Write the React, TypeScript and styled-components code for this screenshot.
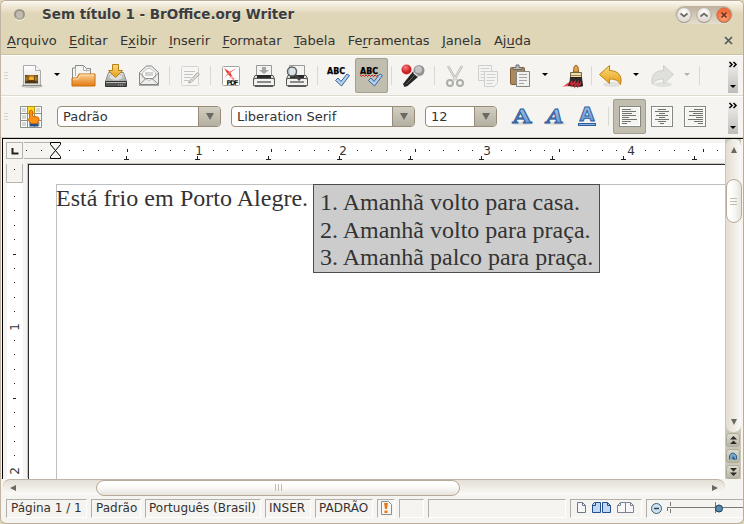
import React from "react";
import styled, { createGlobalStyle, css } from "styled-components";

const Global = createGlobalStyle`
  html, body { margin: 0; padding: 0; background: #dfd5b7; overflow: hidden; }
  * { box-sizing: border-box; }
  body { font: 13px "DejaVu Sans", sans-serif; color: #333; }
  svg { display: block; flex: none; overflow: visible; }
`;

const Window = styled.div`
  width: 744px;
  height: 524px;
  display: flex;
  flex-direction: column;
  border: 1px solid #b9ac99;
  border-left-color: #c2b4a3;
  border-bottom: 1px solid #b9ac99;
  border-radius: 6px;
  background: #f5f4f0;
  overflow: hidden;
`;

const TitleBar = styled.header`
  height: 27px;
  flex: none;
  display: flex;
  align-items: center;
  padding: 0 10px 0 13px;
  background: linear-gradient(#fcfaf5 0, #f3ecdc 4px, #e4dabf 11px, #dfd5b7 13px);
`;

const WindowDot = styled.i`
  width: 11px;
  height: 11px;
  border-radius: 50%;
  background: #c1bcb2;
  border: 2px solid #9a9486;
  border-bottom-color: #b5ae9e;
  box-shadow: 0 1px 0 #f6f1e2;
`;

const Title = styled.h1`
  margin: 0 auto 0 17px;
  font-size: 13.5px;
  font-weight: bold;
  line-height: 27px;
  color: #3c3d3f;
  text-shadow: 0 1px 0 #f1ead7;
  white-space: nowrap;
`;

const WindowButtons = styled.div`
  display: flex;
  gap: 4px;
  height: 18px;
  padding: 1px;
  border-radius: 9px;
  background: linear-gradient(#bcb09e, #e6dfce);
`;

const MenuBar = styled.nav`
  height: 27px;
  flex: none;
  display: flex;
  align-items: center;
  padding: 0 10px 1px 6px;
  background: #dfd5b7;
  border-bottom: 1px solid #d0c3a0;
`;

const MenuItem = styled.span`
  margin-right: 12.3px;
  line-height: 20px;
  white-space: nowrap;
  u { text-underline-offset: 2px; text-decoration-thickness: 1px; }
`;

const Toolbar = styled.div<{ $last?: boolean }>`
  height: ${(p) => (p.$last ? 42 : 41)}px;
  flex: none;
  display: flex;
  align-items: center;
  background: #f5f4f0;
  border-top: 1px solid #fff;
  border-bottom: 1px solid ${(p) => (p.$last ? "#cfcdc4" : "#dfdccf")};
  padding: 0 5px ${(p) => (p.$last ? 1 : 0)}px 3px;
`;

const Grip = styled.i`
  width: 4px;
  height: 8px;
  margin-right: 12px;
  background: repeating-linear-gradient(#d8d5cd 0 1px, #f5f4f0 1px 3px);
`;

const Slot = styled.span<{ $before: number; $pressed?: boolean }>`
  flex: none;
  display: flex;
  align-items: center;
  justify-content: center;
  margin-left: ${(p) => p.$before}px;
  ${(p) =>
    p.$pressed &&
    css`
      width: 33px;
      height: 35px;
      border: 1px solid #a39f8e;
      border-radius: 2px;
      background: #c1beb0;
    `}
`;

const Separator = styled.i<{ $before: number }>`
  width: 1px;
  height: 19px;
  margin-left: ${(p) => p.$before}px;
  background: #dad8d0;
`;

const Caret = styled.i<{ $before: number; $dim?: boolean }>`
  margin-left: ${(p) => p.$before}px;
  margin-bottom: 2px;
  border: 3px solid transparent;
  border-top-color: ${(p) => (p.$dim ? "#b4b2ac" : "#000")};
  border-bottom: 0;
`;

const Overflow = styled.div`
  width: 10px;
  height: 35px;
  margin-left: auto;
  display: flex;
  flex-direction: column;
  justify-content: space-between;
  align-items: center;
  padding: 4px 0 5px;
  background: linear-gradient(#f7f6f3, #bebdbb);
`;

const OverflowCaret = styled.i`
  border: 3px solid transparent;
  border-top-color: #000;
  border-bottom: 0;
`;

const Combo = styled.div<{ $w: number; $before: number }>`
  width: ${(p) => p.$w}px;
  height: 21px;
  flex: none;
  margin-left: ${(p) => p.$before}px;
  display: flex;
  border: 1px solid #988c78;
  border-radius: 4px;
  background: #fff;
  overflow: hidden;
  line-height: 19px;
  padding-left: 5px;
  white-space: nowrap;
`;

const ComboButton = styled.span`
  width: 22px;
  margin-left: auto;
  display: flex;
  align-items: center;
  justify-content: center;
  border-left: 1px solid #988c78;
  background: linear-gradient(#d2cfc2, #b3b0a2);
  &::after {
    content: "";
    border: 4px solid transparent;
    border-top: 7px solid #6a6963;
    border-bottom: 0;
  }
`;

const Workspace = styled.main`
  height: 341px;
  flex: none;
  display: grid;
  grid-template-columns: 723px 17px;
  grid-template-rows: 25px 315px;
  margin-left: 1px;
  border-top: 1px solid #000;
`;

const HorizontalRuler = styled.div`
  border-left: 1px solid #000;
`;

const EditArea = styled.div`
  display: flex;
  border-left: 1px solid #000;
`;

const Page = styled.article`
  flex: 1;
  padding: 19px 0 0 27px;
  background: #fff;
  border: solid #2d2d2d;
  border-width: 1px 0 0 1px;
  box-shadow: -1px -1px 0 #c8c6bf;
`;

const TextFrame = styled.div`
  height: 100%;
  display: flex;
  align-items: flex-start;
  border: solid #bfbfbf;
  border-width: 1px 0 0 1px;
  font-family: "Liberation Serif", serif;
  font-size: 24px;
  white-space: nowrap;
`;

const Paragraph = styled.p`
  width: 257px;
  flex: none;
  margin: 0 0 0 -1px;
  line-height: 27px;
  word-spacing: 0.2px;
`;

const Suggestions = styled.ol`
  width: 287px;
  height: 89px;
  flex: none;
  margin: -1px 0 0;
  padding: 4px 0 0 6px;
  list-style: none;
  background: #ccc;
  border: 1px solid #4c4c4c;
  li { line-height: 27.5px; }
`;

const VerticalScroll = styled.div`
  grid-column: 2;
  grid-row: 1 / 3;
  width: 16px;
  display: flex;
  flex-direction: column;
  background: #cbc7b9;
`;

const VerticalTrack = styled.div`
  height: 293px;
  flex: none;
  display: flex;
  flex-direction: column;
  align-items: center;
  justify-content: space-between;
  margin-left: 1px;
  border-radius: 7px;
  background: linear-gradient(90deg, #e3ddd2, #faf9f6);
  padding: 8px 0 7px;
`;

const Thumb = styled.div<{ $vertical?: boolean }>`
  flex: none;
  width: ${(p) => (p.$vertical ? 16 : 364)}px;
  height: ${(p) => (p.$vertical ? 44 : 16)}px;
  border: 1px solid #b8aa98;
  border-radius: 8px;
  display: flex;
  align-items: center;
  justify-content: center;
  background: linear-gradient(${(p) => (p.$vertical ? "90deg" : "180deg")}, #fff 20%, #f9f8f5 50%, #e6e3dc);
`;

const ThumbGrip = styled.i<{ $vertical?: boolean }>`
  width: 7px;
  height: 7px;
  background: repeating-linear-gradient(${(p) => (p.$vertical ? "180deg" : "90deg")}, #c4bbac 0 1px, transparent 1px 3px);
`;

const TrackStart = styled.div`
  height: 32px;
`;

const TrackEnd = styled.div`
  height: 202px;
  display: flex;
  align-items: flex-end;
`;

const NavButton = styled.span`
  height: 14px;
  flex: none;
  margin: 1px 1px 1px;
  display: flex;
  align-items: center;
  justify-content: center;
  border: 1px solid #b0ac9a;
  border-radius: 3px;
  background: linear-gradient(#dedbcf, #b8b4a4);
`;

const HorizontalScroll = styled.div`
  width: 722px;
  height: 16px;
  flex: none;
  margin-left: 2px;
  display: flex;
  align-items: center;
  border-top: 1px solid #bcb4a5;
  border-radius: 7px 8px 8px 7px;
  background: linear-gradient(#e4dfd5, #fbfaf8);
  padding: 0 7px;
`;

const ThumbOffset = styled.div`
  width: 86px;
`;

const StatusBar = styled.footer`
  height: 27px;
  flex: none;
  display: flex;
  gap: 4px;
  padding: 4px 0 0 5px;
  font-size: 12px;
`;

const Cell = styled.div<{ $w: number; $pad?: number }>`
  width: ${(p) => p.$w}px;
  height: 19px;
  flex: none;
  display: flex;
  align-items: center;
  padding: 0 0 1px ${(p) => p.$pad ?? 4}px;
  border: 1px solid #fff;
  border-top-color: #b0aea8;
  border-left-color: #b0aea8;
  white-space: nowrap;
  overflow: hidden;
`;

const PushEnd = styled.span`
  margin-left: auto;
`;

const Definitions = styled.svg`
  position: absolute;
`;

type IconProps = { w?: number; h?: number; children: React.ReactNode };
const Icon = ({ w = 24, h = 24, children }: IconProps) => (
  <svg width={w} height={h} viewBox={`0 0 ${w} ${h}`}>{children}</svg>
);

const Gradients = () => (
  <Definitions width="0" height="0">
    <defs>
      <linearGradient id="paper" x2="0" y2="1"><stop stopColor="#fff" /><stop offset="1" stopColor="#d9d9d7" /></linearGradient>
      <linearGradient id="orange" x2="0" y2="1"><stop stopColor="#fad29a" /><stop offset="1" stopColor="#e57a0e" /></linearGradient>
      <linearGradient id="gold" x2="0" y2="1"><stop stopColor="#fbdc7a" /><stop offset="1" stopColor="#e59d18" /></linearGradient>
      <linearGradient id="steel" x2="0" y2="1"><stop stopColor="#e8e8e8" /><stop offset="1" stopColor="#a4a5a5" /></linearGradient>
      <linearGradient id="blue" x2="0" y2="1"><stop stopColor="#a9c6e8" /><stop offset="1" stopColor="#5d8fce" /></linearGradient>
      <radialGradient id="sunset" cy=".45" r=".6"><stop stopColor="#ffcf3d" /><stop offset=".5" stopColor="#c98320" /><stop offset="1" stopColor="#5b4420" /></radialGradient>
      <radialGradient id="red" cx=".4" cy=".3"><stop stopColor="#f58080" /><stop offset="1" stopColor="#cc2023" /></radialGradient>
      <radialGradient id="pearl" cy=".3"><stop stopColor="#fff" /><stop offset="1" stopColor="#e3dfd8" /></radialGradient>
      <radialGradient id="closeFill" cy=".7"><stop stopColor="#ffa57b" /><stop offset="1" stopColor="#f26d38" /></radialGradient>
    </defs>
  </Definitions>
);

const WinButton = ({ d, close }: { d: string; close?: boolean }) => (
  <Icon w={16} h={16}>
    <circle cx="8" cy="8.6" r="7.4" fill="#958978" />
    <circle cx="8" cy="8" r="7.2" fill={close ? "url(#closeFill)" : "url(#pearl)"} stroke={close ? "#c76a45" : "#b9afa2"} strokeWidth=".6" />
    <path d={d} fill="none" stroke={close ? "#693325" : "#696761"} strokeWidth="1.7" />
  </Icon>
);

const NewIcon = () => (
  <Icon>
    <ellipse cx="12" cy="22.500" rx="11" ry="1.500" fill="#999" opacity=".5" />
    <path d="M3.500 1.500h12l5 5v15h-17z" fill="url(#paper)" stroke="#a9aaa8" />
    <path d="M15.500 1.500v5h5" fill="#f8f8f8" stroke="#aaa" />
    <path d="M5 11h13v8H5z" fill="url(#sunset)" />
    <path d="M5 19l4-2.500h5l4 2.500zM8 12v7M14.500 12v6" fill="#4e3515" stroke="#4e3515" strokeWidth=".7" />
    <path d="M2 21.500h20" stroke="#8c8d8b" />
  </Icon>
);
const OpenIcon = () => (
  <Icon>
    <path d="M1.500 20V4h3V1.500h8l3 3h4V20" fill="#f4f4f2" stroke="#888a85" />
    <path d="M4.500 4v8M12.500 1.500v5h7M15.500 4.500v3" stroke="#b1b2af" fill="none" />
    <path d="M1 22V14h5l2-4h16v12z" fill="url(#orange)" stroke="#c46c13" />
    <path d="M2 15h5l2-4h14" stroke="#ffe0ad" fill="none" />
  </Icon>
);
const SaveIcon = () => (
  <Icon>
    <path d="M4.500 8.500h15l3 9h-21z" fill="url(#steel)" stroke="#8b8c8a" />
    <ellipse cx="12" cy="13" rx="7" ry="3.500" fill="#dedfdd" stroke="#b5b6b4" />
    <path d="M1.500 17.500h21v5h-21z" fill="#555753" stroke="#333" />
    <path d="M2 18.500h20" stroke="#b9bbb7" />
    <path d="M14 21h6" stroke="#bbb" strokeDasharray="1 1" />
    <path d="M8.500 .500h6v6h4l-7 7-7-7h4z" fill="url(#gold)" stroke="#b67e19" />
  </Icon>
);
const MailIcon = () => (
  <Icon>
    <path d="M2.500 8.500L9.500 2h5l7 6.500v12h-19z" fill="#eeeeec" stroke="#868884" />
    <path d="M5.500 13.500v-5l5-4h3l5 4v5l-6.500 3z" fill="#fafafa" stroke="#c1c2bf" />
    <path d="M8 9h8M8 11h8" stroke="#aaa" />
    <path d="M2.500 9l6 5.500h7l6-5.500M3 20l6-5.500M21 20l-6-5.500" fill="none" stroke="#8d8f8b" />
    <path d="M2 21.500h20" stroke="#aaa" />
  </Icon>
);
const EditIcon = () => (
  <Icon>
    <rect x="3.500" y="2.500" width="17" height="19" rx="1" fill="#f6f6f4" stroke="#d4d3cf" />
    <path d="M6 7.500h11M6 10.500h9M6 13.500h7M6 16.500h5" stroke="#c5c4c0" />
    <path d="M11.500 17l8-8.500 2 2-8 7.500-3 1z" fill="#dfdedb" stroke="#aaa9a5" />
  </Icon>
);
const PdfIcon = () => (
  <Icon>
    <rect x="3.500" y="2.500" width="17" height="19" rx="1" fill="#fff" stroke="#a1a39f" />
    <path d="M5 4l6 4 5 10-8-9z" fill="#ee3a36" />
    <path d="M5 14l5-6 8-4-7 5z" fill="#f46e69" />
    <path d="M12 12l6 3-8-1z" fill="#f9b4b0" />
    <text x="7.500" y="20.500" fontSize="6.500" fontWeight="bold" fontFamily="DejaVu Sans, sans-serif" textLength="12" fill="#111">PDF</text>
  </Icon>
);
const PrintIcon = ({ preview }: { preview?: boolean }) => (
  <Icon>
    <path d="M4.500 12V1.500h15V12" fill="#f3f4f2" stroke="#999b97" />
    <path d="M3 11.500h18l1.500 3v7h-21v-7z" fill="url(#steel)" stroke="#555753" />
    <path d="M5 11h14v4H5z" fill="#2a2a2a" />
    <rect x="1.500" y="14.500" width="21" height="7.500" rx="1.500" fill="#f2f3f0" stroke="#555753" />
    <path d="M5 18h14" stroke="#8b8d88" strokeWidth="2" />
    <path d="M3 22h18" stroke="#41443f" strokeWidth="1.500" />
    {preview ? (
      <g><circle cx="7" cy="7.500" r="4.500" fill="#d6dfe6" fillOpacity=".8" stroke="#5f615f" strokeWidth="1.500" /><path d="M10 11l5 5" stroke="#444" strokeWidth="2.500" /></g>
    ) : (
      <path d="M10 3h4v3h3l-5 4-5-4h3z" fill="#a3a5a1" />
    )}
  </Icon>
);
const CheckIcon = ({ wavy }: { wavy?: boolean }) => (
  <Icon>
    <text x="0" y="9.500" fontSize="8" fontWeight="bold" fontFamily="DejaVu Sans, sans-serif" textLength="18" lengthAdjust="spacingAndGlyphs" fill="#000" stroke="#000" strokeWidth=".25">ABC</text>
    {wavy && <path d="M0 11l1.500 1.500L3 11l1.500 1.500L6 11l1.500 1.500L9 11l1.500 1.500L12 11l1.500 1.500L15 11l1.500 1.500L18 11" fill="none" stroke="#d32222" />}
    <path d="M8.500 16.500l2.500-2.500 3 3.500L20 10l2.500 1.500-8 10.500z" fill="#b7d0ec" stroke="#34659f" strokeLinejoin="round" />
  </Icon>
);
const MicIcon = () => (
  <Icon>
    <path d="M3.500 23l-1.500-3L12 7.500l5.500 5L6.500 22z" fill="#242424" />
    <path d="M5 20.500L14.500 10" stroke="#666" />
    <circle cx="18" cy="6.500" r="5.500" fill="#929392" />
    <circle cx="17.500" cy="5.500" r="3.500" fill="#c4c5c4" />
    <path d="M12.500 8.500l4.500 4" stroke="#dcdcdc" strokeWidth="1.500" />
    <circle cx="5.500" cy="5.500" r="5" fill="url(#red)" />
  </Icon>
);
const CutIcon = () => (
  <Icon>
    <path d="M5 2l8 14M19 2l-8 14" stroke="#b6b6b3" strokeWidth="2.500" />
    <path d="M5 2l8 14M19 2l-8 14" stroke="#e6e6e3" strokeWidth="1" />
    <circle cx="7" cy="19" r="3" fill="none" stroke="#acaca9" strokeWidth="2" />
    <circle cx="17" cy="19" r="3" fill="none" stroke="#acaca9" strokeWidth="2" />
  </Icon>
);
const CopyIcon = () => (
  <Icon>
    {[[2.5, 1.5], [8.5, 7.5]].map(([x, y]) => (
      <g key={x}>
        <path d={`M${x} ${y}h13v11l-3 4h-10z`} fill="#f4f4f2" stroke="#cfcfcc" />
        <path d={`M${x + 2} ${y + 3}h9m-9 3h9m-9 3h8m-8 3h6`} stroke="#d0d0cd" />
      </g>
    ))}
  </Icon>
);
const PasteIcon = () => (
  <Icon>
    <rect x="2.500" y="3.500" width="14" height="17" rx="1" fill="#ab8958" stroke="#7c5d34" />
    <path d="M5 5.500V3.500h3V1h3v2.500h3v2z" fill="#bfc0be" stroke="#686a66" />
    <path d="M8.500 7.500h13v15h-13z" fill="#f1f1ef" stroke="#838580" />
    <path d="M11 10.500h8M11 13.500h8M11 16.500h8M11 19.500h5" stroke="#a5a6a3" />
  </Icon>
);
const BrushIcon = () => (
  <Icon>
    <path d="M1 22.500c5-.5 5-4 10-4.500l3 4z" fill="#f5484a" />
    <path d="M13.500 8L14 3q2-3.500 4 0l.5 5z" fill="#e7a652" stroke="#945a1e" />
    <path d="M10.500 8.500h11v5h-11z" fill="#ebdcae" stroke="#73633e" />
    <path d="M11 11.500h10" stroke="#a98a4e" />
    <path d="M10.500 13.500h11l1 8.500-6 .500-8-1q2-3 2-8z" fill="#30292a" stroke="#241d1e" />
    <path d="M10 21l2-4v4.500l3-4v5l3-4.500v4.500l3-4" fill="none" stroke="#c62b38" strokeWidth="1.300" />
  </Icon>
);
const ArrowIcon = ({ redo }: { redo?: boolean }) => (
  <Icon>
    <ellipse cx="13" cy="20.500" rx="9" ry="2.500" fill="#bbb" opacity=".35" />
    <path transform={redo ? "translate(24 0) scale(-1 1)" : undefined} d="M.5 10.500L10.500 1.500v5c8 0 13.500 5 11 14-2-4-5.500-5.500-11-5.500v4.500z" fill={redo ? "#dfdfdc" : "url(#gold)"} stroke={redo ? "#cfcfcc" : "#c28314"} strokeLinejoin="round" />
  </Icon>
);
const StylesIcon = () => (
  <Icon>
    <rect x="1" y="1" width="21" height="21" fill="#fafaf9" />
    <path d="M1.500 1.500h21v21h-21zM8.500 1v21M15.500 1v21M1 8.500h21M1 15.500h21" fill="none" stroke="#8d908a" />
    <path d="M3 3h4v4H3zM3 10h4v4H3zM3 17h4v4H3zM17 3h4v4h-4zM17 17h4v4h-4z" fill="#d4d6d1" />
    <rect x="8.500" y="1.500" width="7" height="7" fill="#fadb26" stroke="#b78f08" />
    <path d="M10.500 17h9v4.500h-9z" fill="#244f88" />
    <path d="M10.500 6q2-2 3 0v5l5 1q2 .500 1.500 3l-1.500 3.500h-6.500l-3-4 1.500-1z" fill="#fd9118" stroke="#d46707" />
  </Icon>
);
const LetterIcon = ({ italic, underline }: { italic?: boolean; underline?: boolean }) => (
  <Icon>
    {!underline && <ellipse cx="12" cy="18.500" rx="11" ry="1.500" fill="#999" opacity=".3" />}
    <text
      x="12" y={underline ? 16 : 18} textAnchor="middle" fontSize={underline ? 19 : 19}
      fontFamily={underline ? "DejaVu Sans, sans-serif" : "DejaVu Serif, Liberation Serif, serif"} fontWeight="bold" fontStyle={italic ? "italic" : "normal"}
      textLength={underline ? 15 : italic ? 17 : 19} lengthAdjust="spacingAndGlyphs" fill="url(#blue)" stroke="#2c5b9c" strokeWidth=".9"
    >A</text>
    {underline && <rect x="3.500" y="18.500" width="17" height="2" fill="#8eb1df" stroke="#2c5b9c" />}
  </Icon>
);
const alignRows = {
  left: ["M3 4h9", "M3 6h14", "M3 8h10", "M3 10h14", "M3 12h7", "M3 14h15", "M3 16h9", "M3 18h5"],
  center: ["M7 4h8", "M4 6h14", "M8 8h6", "M5 10h12", "M8 12h6", "M4 14h14", "M7 16h8", "M9 18h4"],
  right: ["M10 4h9", "M5 6h14", "M9 8h10", "M5 10h14", "M12 12h7", "M4 14h15", "M10 16h9", "M14 18h5"],
};
const AlignIcon = ({ side }: { side: keyof typeof alignRows }) => (
  <Icon w={22} h={22}>
    <rect x=".5" y=".5" width="21" height="20" fill="#f4f4f1" stroke="#858982" />
    <rect x="1.500" y="1.500" width="19" height="18" fill="none" stroke="#fff" />
    <path d={alignRows[side].join("")} transform="translate(0 -.5)" stroke="#71746f" />
  </Icon>
);

const OverflowMenu = () => (
  <Overflow>
    <Icon w={8} h={6}><path d="M.5 0l2.500 2.500-2.500 2.500M4.500 0l2.500 2.500-2.500 2.500" fill="none" stroke="#000" strokeWidth="1.500" /></Icon>
    <OverflowCaret />
  </Overflow>
);

const INCH = 144;
const range = (n: number) => Array.from({ length: n }, (_, i) => i);

const TopRuler = () => (
  <Icon w={722} h={25}>
    <rect width="722" height="25" fill="#f5f4f0" />
    <rect x="53" y="4" width="669" height="16" fill="#fff" />
    <rect x="3.500" y="3.500" width="16" height="16" fill="#f5f4f0" stroke="#b5b3ad" />
    <path d="M9.500 9v5.500h6" fill="none" stroke="#222" strokeWidth="2" />
    <path d="M21 3.500h31M21 19.500h31" stroke="#b5b3ad" />
    <path d="M23 11.500h1M38 11.500h1" stroke="#222" />
    {range(47).slice(1).map((i) => {
      const x = Math.floor(52 + (i * INCH) / 10);
      if (i % 10 === 0) return <text key={i} x={x} y="15.500" textAnchor="middle" fontSize="12" fill="#333">{i / 10}</text>;
      return <rect key={i} x={x} y={i % 5 ? 11 : 10} width="1" height={i % 5 ? 1 : 3} fill="#222" />;
    })}
    {range(10).slice(1).map((i) => <path key={i} d={`M${52.5 + i * 71} 17v3m-2.500 .5h5`} stroke="#222" />)}
    <path d="M47.500 3.500h10v2l-5 6 5 6v2h-10v-2l5-6-5-6z" fill="#f5f4f0" stroke="#000" />
  </Icon>
);

const SideRuler = () => (
  <Icon w={25} h={315}>
    <rect width="25" height="315" fill="#f5f4f0" />
    <rect x="4" y="18" width="16" height="297" fill="#fff" />
    <path d="M3.500 0v18.500h16V0" fill="none" stroke="#b5b3ad" />
    <rect x="11" y="5" width="1" height="1" fill="#222" />
    {range(21).slice(1).map((i) => {
      const y = Math.floor(19 + (i * INCH) / 10);
      if (i % 10 === 0) return <text key={i} transform={`translate(15.500 ${y}) rotate(-90)`} textAnchor="middle" fontSize="12" fill="#333">{i / 10}</text>;
      return <rect key={i} x={i % 5 ? 11 : 10} y={y - 1} width={i % 5 ? 1 : 3} height="1" fill="#222" />;
    })}
  </Icon>
);

const Triangle = ({ d }: { d: string }) => (
  <Icon w={6} h={6}><path d={d} fill="#696861" /></Icon>
);

const menus = [["", "A", "rquivo"], ["", "E", "ditar"], ["E", "x", "ibir"], ["", "I", "nserir"], ["", "F", "ormatar"], ["", "T", "abela"], ["Fe", "r", "ramentas"], ["", "J", "anela"], ["Aj", "u", "da"]];

export default function App() {
  return (
    <>
      <Global />
      <Gradients />
      <Window>
        <TitleBar>
          <WindowDot />
          <Title>Sem título 1 - BrOffice.org Writer</Title>
          <WindowButtons>
            <WinButton d="M4.500 6.500L8 9.500l3.500-3" />
            <WinButton d="M4.500 9.500L8 6.500l3.500 3" />
            <WinButton close d="M5.500 5.500l5 5m0-5l-5 5" />
          </WindowButtons>
        </TitleBar>
        <MenuBar>
          {menus.map(([a, u, b]) => <MenuItem key={u + b}>{a}<u>{u}</u>{b}</MenuItem>)}
          <PushEnd>
            <Icon w={9} h={9}><path d="M1 1l7 7M8 1L1 8" stroke="#53595c" strokeWidth="1.700" /></Icon>
          </PushEnd>
        </MenuBar>

        <Toolbar>
          <Grip />
          <Slot $before={0}><NewIcon /></Slot>
          <Caret $before={10} />
          <Slot $before={11}><OpenIcon /></Slot>
          <Slot $before={9}><SaveIcon /></Slot>
          <Slot $before={9}><MailIcon /></Slot>
          <Separator $before={8} />
          <Slot $before={8}><EditIcon /></Slot>
          <Separator $before={8} />
          <Slot $before={8}><PdfIcon /></Slot>
          <Slot $before={9}><PrintIcon /></Slot>
          <Slot $before={9}><PrintIcon preview /></Slot>
          <Separator $before={8} />
          <Slot $before={9}><CheckIcon /></Slot>
          <Slot $before={4} $pressed><CheckIcon wavy /></Slot>
          <Separator $before={3} />
          <Slot $before={9}><MicIcon /></Slot>
          <Separator $before={9} />
          <Slot $before={8}><CutIcon /></Slot>
          <Slot $before={9}><CopyIcon /></Slot>
          <Slot $before={8}><PasteIcon /></Slot>
          <Caret $before={10} />
          <Slot $before={12}><BrushIcon /></Slot>
          <Separator $before={7} />
          <Slot $before={7}><ArrowIcon /></Slot>
          <Caret $before={10} />
          <Slot $before={11}><ArrowIcon redo /></Slot>
          <Caret $before={10} $dim />
          <Separator $before={9} />
          <OverflowMenu />
        </Toolbar>

        <Toolbar $last>
          <Grip />
          <Slot $before={-1}><StylesIcon /></Slot>
          <Combo $w={164} $before={14}>Padrão<ComboButton /></Combo>
          <Combo $w={184} $before={10}>Liberation Serif<ComboButton /></Combo>
          <Combo $w={72} $before={10}>12<ComboButton /></Combo>
          <Slot $before={13}><LetterIcon /></Slot>
          <Slot $before={9}><LetterIcon italic /></Slot>
          <Slot $before={8}><LetterIcon underline /></Slot>
          <Separator $before={9} />
          <Slot $before={4} $pressed><AlignIcon side="left" /></Slot>
          <Slot $before={5}><AlignIcon side="center" /></Slot>
          <Slot $before={11}><AlignIcon side="right" /></Slot>
          <OverflowMenu />
        </Toolbar>

        <Workspace>
          <HorizontalRuler><TopRuler /></HorizontalRuler>
          <VerticalScroll>
            <VerticalTrack>
              <TrackStart><Triangle d="M0 6L3 0l3 6z" /></TrackStart>
              <Thumb $vertical><ThumbGrip $vertical /></Thumb>
              <TrackEnd><Triangle d="M0 0h6L3 6z" /></TrackEnd>
            </VerticalTrack>
            <NavButton><Icon w={7} h={8}><path d="M0 3.500L3.500 0 7 3.500zM0 8l3.500-3.500L7 8z" fill="#292a27" /></Icon></NavButton>
            <NavButton><Icon w={8} h={8}><path d="M.5 7.500v-4q3-5 7 0v4" fill="#77a4c6" stroke="#2d6288" /><path d="M3 7l1-3 3 4z" fill="#295b80" /></Icon></NavButton>
            <NavButton><Icon w={7} h={8}><path d="M0 0h7L3.500 3.500zM0 4.500h7L3.500 8z" fill="#292a27" /></Icon></NavButton>
          </VerticalScroll>
          <EditArea>
            <SideRuler />
            <Page>
              <TextFrame>
                <Paragraph>Está frio em Porto Alegre.</Paragraph>
                <Suggestions>
                  <li>1. Amanhã volto para casa.</li>
                  <li>2. Amanhã volto para praça.</li>
                  <li>3. Amanhã palco para praça.</li>
                </Suggestions>
              </TextFrame>
            </Page>
          </EditArea>
        </Workspace>

        <HorizontalScroll>
          <ThumbOffset><Triangle d="M6 0v6L0 3z" /></ThumbOffset>
          <Thumb><ThumbGrip /></Thumb>
          <PushEnd><Triangle d="M0 0v6l6-3z" /></PushEnd>
        </HorizontalScroll>

        <StatusBar>
          <Cell $w={81}>Página 1 / 1</Cell>
          <Cell $w={50}>Padrão</Cell>
          <Cell $w={116} $pad={3}>Português (Brasil)</Cell>
          <Cell $w={46} $pad={3}>INSER</Cell>
          <Cell $w={58} $pad={3}>PADRÃO</Cell>
          <Cell $w={18} $pad={2}>
            <Icon w={13} h={14}>
              <path d="M1.500 .5h7l3 3v10h-10z" fill="#f8f8f6" stroke="#8b8d88" />
              <path d="M4 2h4l-1 6H5zM4.500 9.500h3v2.500h-3z" fill="#e97813" />
            </Icon>
          </Cell>
          <Cell $w={25}>{null}</Cell>
          <Cell $w={138}>{null}</Cell>
          <Cell $w={72} $pad={6}>
            <Icon w={60} h={12}>
              <path d="M.5 .5v10h8v-7l-3-3zM5.500 .5v3h3" fill="#f7f7f9" stroke="#6b7687" />
              <path d="M15.500 2.500l2-2h6v10h-8zM25.500 .5h5l3 3v7h-8z" fill="#c3d6f3" stroke="#20528e" />
              <path d="M18.500 .5v3h-3M30.500 .5v3h3" fill="none" stroke="#20528e" />
              <path d="M40.500 3.500l3-3h5v10h-8zM48.500 .5h5l3 3v7h-8zM43.500 .5v3h-3M53.500 .5v3h3" fill="#f7f7f9" stroke="#7b8490" />
            </Icon>
          </Cell>
          <Cell $w={98} $pad={4}>
            <Icon w={94} h={12}>
              <circle cx="5.500" cy="6.500" r="5" fill="#cfe0ed" stroke="#376079" />
              <path d="M3 6.500h5" stroke="#24455d" strokeWidth="1.500" />
              <path d="M16 5.500h78M16.500 5v4M19.500 0v4M19.500 7v4M64.500 0v11" stroke="#777875" />
              <circle cx="68" cy="6.500" r="3.500" fill="#5689ac" stroke="#183e5c" />
            </Icon>
          </Cell>
        </StatusBar>
      </Window>
    </>
  );
}
